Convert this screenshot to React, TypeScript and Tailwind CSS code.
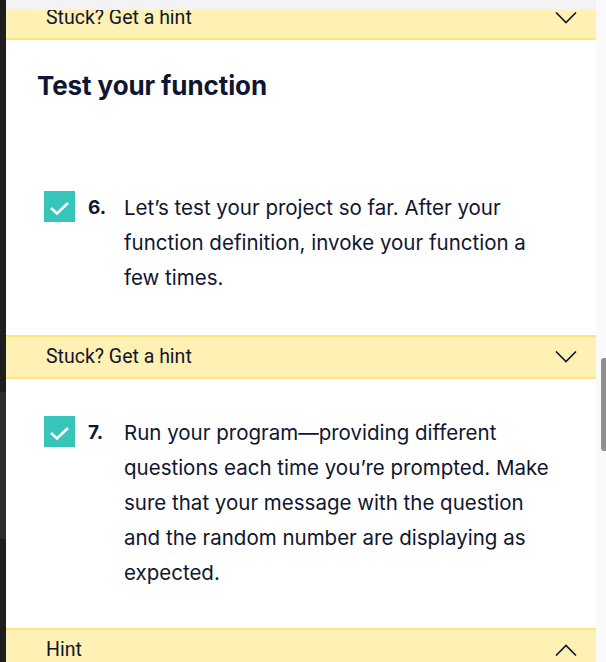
import React from "react";

const STEPS = [
  {
    n: "6.",
    text: "Let’s test your project so far. After your function definition, invoke your function a few times.",
  },
  {
    n: "7.",
    text: "Run your program—providing different questions each time you’re prompted. Make sure that your message with the question and the random number are displaying as expected.",
  },
];

function Chevron({ up = false }: { up?: boolean }) {
  return (
    <svg width="22" height="12" viewBox="0 0 22 12" fill="none" className="shrink-0">
      <path
        d={up ? "M1 11.5 L11 1.5 L21 11.5" : "M1 0.5 L11 10.5 L21 0.5"}
        stroke="#10162f"
        strokeWidth="1.6"
      />
    </svg>
  );
}

function HintBar({ label, up = false }: { label: string; up?: boolean }) {
  return (
    <div className="flex h-[44px] shrink-0 items-center justify-between border-y-2 border-[#ffe580] bg-[#fff0b3] pl-[40px] pr-[19px]">
      <span className="font-['Roboto',sans-serif] text-[19.5px] leading-[24px] text-[#10162f]">{label}</span>
      <Chevron up={up} />
    </div>
  );
}

function Step({ n, text }: { n: string; text: string }) {
  return (
    <div className="flex items-start pl-[38px] pr-[41px]">
      <div className="mt-[0.5px] flex h-[31px] w-[31px] shrink-0 items-center justify-center bg-[#37c5bb]">
        <svg width="31" height="31" viewBox="0 0 31 31" fill="none">
          <path d="M7 17 L13 22.5 L24 12" stroke="white" strokeWidth="2.6" />
        </svg>
      </div>
      <span className="ml-[13px] w-[36px] shrink-0 text-[19px] font-bold leading-[35px]">{n}</span>
      <p className="text-[20.5px] leading-[35px]">{text}</p>
    </div>
  );
}

export default function App() {
  return (
    <div className="relative flex h-[662px] w-[606px] overflow-hidden bg-white font-['Inter',sans-serif] text-[#10162f]">
      {/* editor edge */}
      <div className="flex w-[6px] shrink-0 flex-col bg-[#1e1e1e]">
        <div className="h-[392px]" />
        <div className="h-[147px] bg-[#2b2d30]" />
      </div>

      <main className="relative flex w-[590px] shrink-0 flex-col">
        <div className="absolute left-0 right-0 top-0 z-10 h-[10px] bg-[#f3f3f6]" />
        <div className="mt-[-4px]">
          <HintBar label="Stuck? Get a hint" />
        </div>

        <h2 className="mt-[30px] pl-[31px] text-[26px] font-bold leading-[32px] tracking-[-0.1px]">
          Test your function
        </h2>

        <div className="pb-[40px] pt-[88px]">
          <Step {...STEPS[0]} />
        </div>
        <HintBar label="Stuck? Get a hint" />
        <div className="pb-[38px] pt-[36px]">
          <Step {...STEPS[1]} />
        </div>
        <HintBar label="Hint" up />
      </main>

      {/* scrollbar */}
      <div className="relative w-[10px] shrink-0 bg-[#fafafa]">
        <div className="absolute right-0 top-[358px] h-[93px] w-[5px] rounded-l-[3px] bg-[#8f8f8f]" />
      </div>
    </div>
  );
}
